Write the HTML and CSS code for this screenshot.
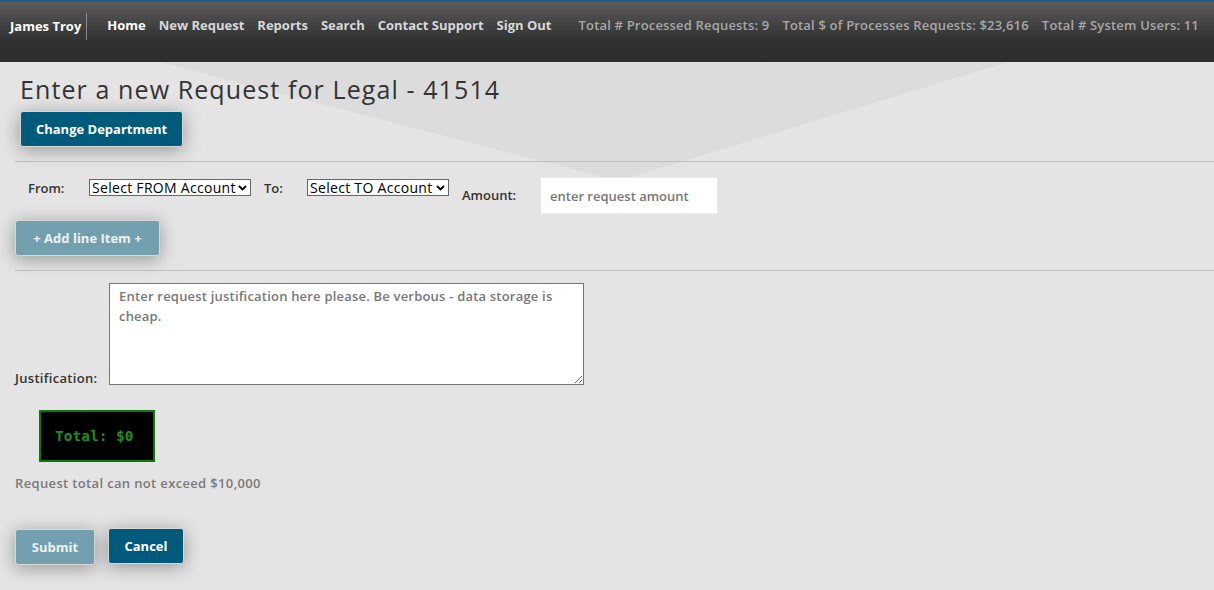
FILE: index.html
```html
<!DOCTYPE html>
<html>
<head>
<meta charset="utf-8">
<link rel="stylesheet" href="styles.css">
</head>
<body>
<header class="nav">
  <div class="brand">James Troy</div>
  <nav class="links">
    <a class="link active">Home</a>
    <a class="link">New Request</a>
    <a class="link">Reports</a>
    <a class="link">Search</a>
    <a class="link">Contact Support</a>
    <a class="link">Sign Out</a>
  </nav>
  <div class="stats">
    <span>Total # Processed Requests: 9</span>
    <span>Total $ of Processes Requests: $23,616</span>
    <span>Total # System Users: 11</span>
  </div>
</header>
<main class="main">
  <div class="bgshape"></div>
  <div class="content">
    <h1 class="title">Enter a new Request for Legal - 41514</h1>
    <button class="btn btn-dark btn-dept">Change Department</button>
    <hr class="rule rule-1">
    <div class="line-row">
      <label class="lbl lbl-from">From:</label>
      <select class="sel sel-from"><option>Select FROM Account</option></select>
      <label class="lbl lbl-to">To:</label>
      <select class="sel sel-to"><option>Select TO Account</option></select>
      <label class="lbl lbl-amount">Amount:</label>
      <input class="amount" type="text" placeholder="enter request amount">
    </div>
    <button class="btn btn-light btn-add">+ Add line Item +</button>
    <hr class="rule rule-2">
    <div class="just-row">
      <label class="lbl lbl-just">Justification:</label>
      <textarea class="just" placeholder="Enter request justification here please. Be verbous - data storage is cheap."></textarea>
    </div>
    <div class="total">Total: $0</div>
    <p class="note">Request total can not exceed $10,000</p>
    <div class="actions">
      <button class="btn btn-light btn-submit">Submit</button>
      <button class="btn btn-dark btn-cancel">Cancel</button>
    </div>
  </div>
</main>
</body>
</html>
```
FILE: styles.css
```css
* { box-sizing: border-box; }
html, body { margin: 0; padding: 0; }
body {
  width: 1214px;
  height: 590px;
  overflow: hidden;
  background: #e4e4e4;
  font-family: "Open Sans", "Liberation Sans", sans-serif;
  color: #333;
}
.nav {
  height: 62px;
  border-top: 2px solid #1d5b8f;
  background: linear-gradient(#5b5b5b 0px, #3a3a3a 30px, #303030 40px, #2e2e2e 100%);
  display: flex;
  align-items: flex-start;
  padding-top: 14px;
  font-size: 13px;
  font-weight: 700;
  white-space: nowrap;
}
.brand {
  color: #fff;
  padding: 5px 5px 2px 10px;
  border-right: 1px solid #888;
  height: 27px;
  line-height: 17px;
  margin-top: -3px;
}
.links { display: flex; gap: 13px; margin-left: 20px; }
.link { color: #d8d8d8; line-height: 18px; }
.link.active { color: #fff; }
.stats {
  display: flex;
  gap: 13px;
  margin-left: 27px;
  color: #a8a8a8;
  font-weight: 600;
  line-height: 18px;
  letter-spacing: 0.18px;
}
.main { position: relative; height: 528px; }
.bgshape {
  position: absolute;
  inset: 0;
  background: #dcdcdc;
  clip-path: polygon(160px 0, 1008px 0, 618px 119px);
}
.content { position: relative; padding: 0 0 0 15px; }
.title {
  margin: 0;
  padding: 12px 0 0 5px;
  font-size: 25px;
  font-weight: 500;
  line-height: 30px;
  letter-spacing: 1.1px;
  color: #333;
}
.btn {
  display: block;
  font-family: "Open Sans", "Liberation Sans", sans-serif;
  font-size: 13px;
  font-weight: 700;
  border: 1px solid #d8d8d8;
  border-radius: 3px;
  color: #fff;
  box-shadow: 0 3px 18px rgba(0,0,0,0.35);
  cursor: pointer;
}
.btn-dark { background: #005a7b; }
.btn-light { background: #73a0af; color: #edf2f4; }
.btn-dept { margin: 7px 0 0 5px; width: 163px; height: 36px; }
.rule { border: 0; border-top: 1px solid #bdbdbd; margin: 0; }
.rule-1 { margin-top: 14px; }
.line-row {
  display: flex;
  align-items: flex-start;
  margin-top: 16px;
  font-size: 13px;
}
.lbl { font-size: 13px; font-weight: 600; color: #333; }
.lbl-from { margin: 1px 0 0 13px; width: 61px; }
.sel {
  appearance: none;
  -webkit-appearance: none;
  height: 17px;
  font-family: "Open Sans", "Liberation Sans", sans-serif;
  font-size: 14px;
  font-weight: 500;
  letter-spacing: 0.3px;
  line-height: 15px;
  color: #000;
  background: #fff url("data:image/svg+xml,%3Csvg xmlns='http://www.w3.org/2000/svg' width='9' height='6' viewBox='0 0 9 6'%3E%3Cpath d='M1 1l3.5 3.5L8 1' fill='none' stroke='%23000' stroke-width='1.8'/%3E%3C/svg%3E") no-repeat right 3px center;
  border: 1px solid #666;
  padding: 0 14px 0 2px;
  margin-top: 1px;
}
.sel-from { width: 162px; }
.lbl-to { margin: 1px 0 0 13px; width: 43px; }
.sel-to { width: 142px; }
.lbl-amount { margin: 8px 0 0 13px; width: 78px; }
.amount {
  width: 178px;
  height: 37px;
  border: 1px solid #eaeaea;
  background: #fff;
  padding: 0 9px;
  margin-top: -1px;
  font-family: "Open Sans", "Liberation Sans", sans-serif;
  font-size: 13px;
  font-weight: 600;
}
.amount::placeholder { color: #777; }
.btn-add { margin-top: 6px; width: 145px; height: 36px; }
.rule-2 { margin-top: 14px; }
.just-row { display: flex; align-items: flex-end; margin-top: 12px; }
.lbl-just { width: 94px; line-height: 14px; padding-bottom: 0; letter-spacing: 0.3px; }
.just {
  width: 475px;
  height: 102px;
  border: 1px solid #777;
  background: #fff;
  padding: 2px 9px;
  font-family: "Open Sans", "Liberation Sans", sans-serif;
  font-size: 13px;
  font-weight: 600;
  line-height: 20px;
  letter-spacing: 0.2px;
  resize: vertical;
  display: block;
}
.just::placeholder { color: #777; }
.total {
  margin: 25px 0 0 24px;
  width: 116px;
  height: 52px;
  background: #000;
  border: 2px solid #0a7a0a;
  color: #1e8f1e;
  font-family: "DejaVu Sans Mono", "Liberation Mono", monospace;
  font-weight: 700;
  font-size: 14.5px;
  padding: 0 0 0 14px;
  line-height: 48px;
}
.note {
  margin: 13px 0 0 0;
  font-size: 13px;
  font-weight: 600;
  color: #7a7a7a;
  line-height: 16px;
  letter-spacing: 0.35px;
}
.actions { display: flex; align-items: flex-start; gap: 13px; margin-top: 37px; }
.btn-submit { width: 80px; height: 36px; margin-top: 1px; }
.btn-cancel { width: 76px; height: 36px; }
```
